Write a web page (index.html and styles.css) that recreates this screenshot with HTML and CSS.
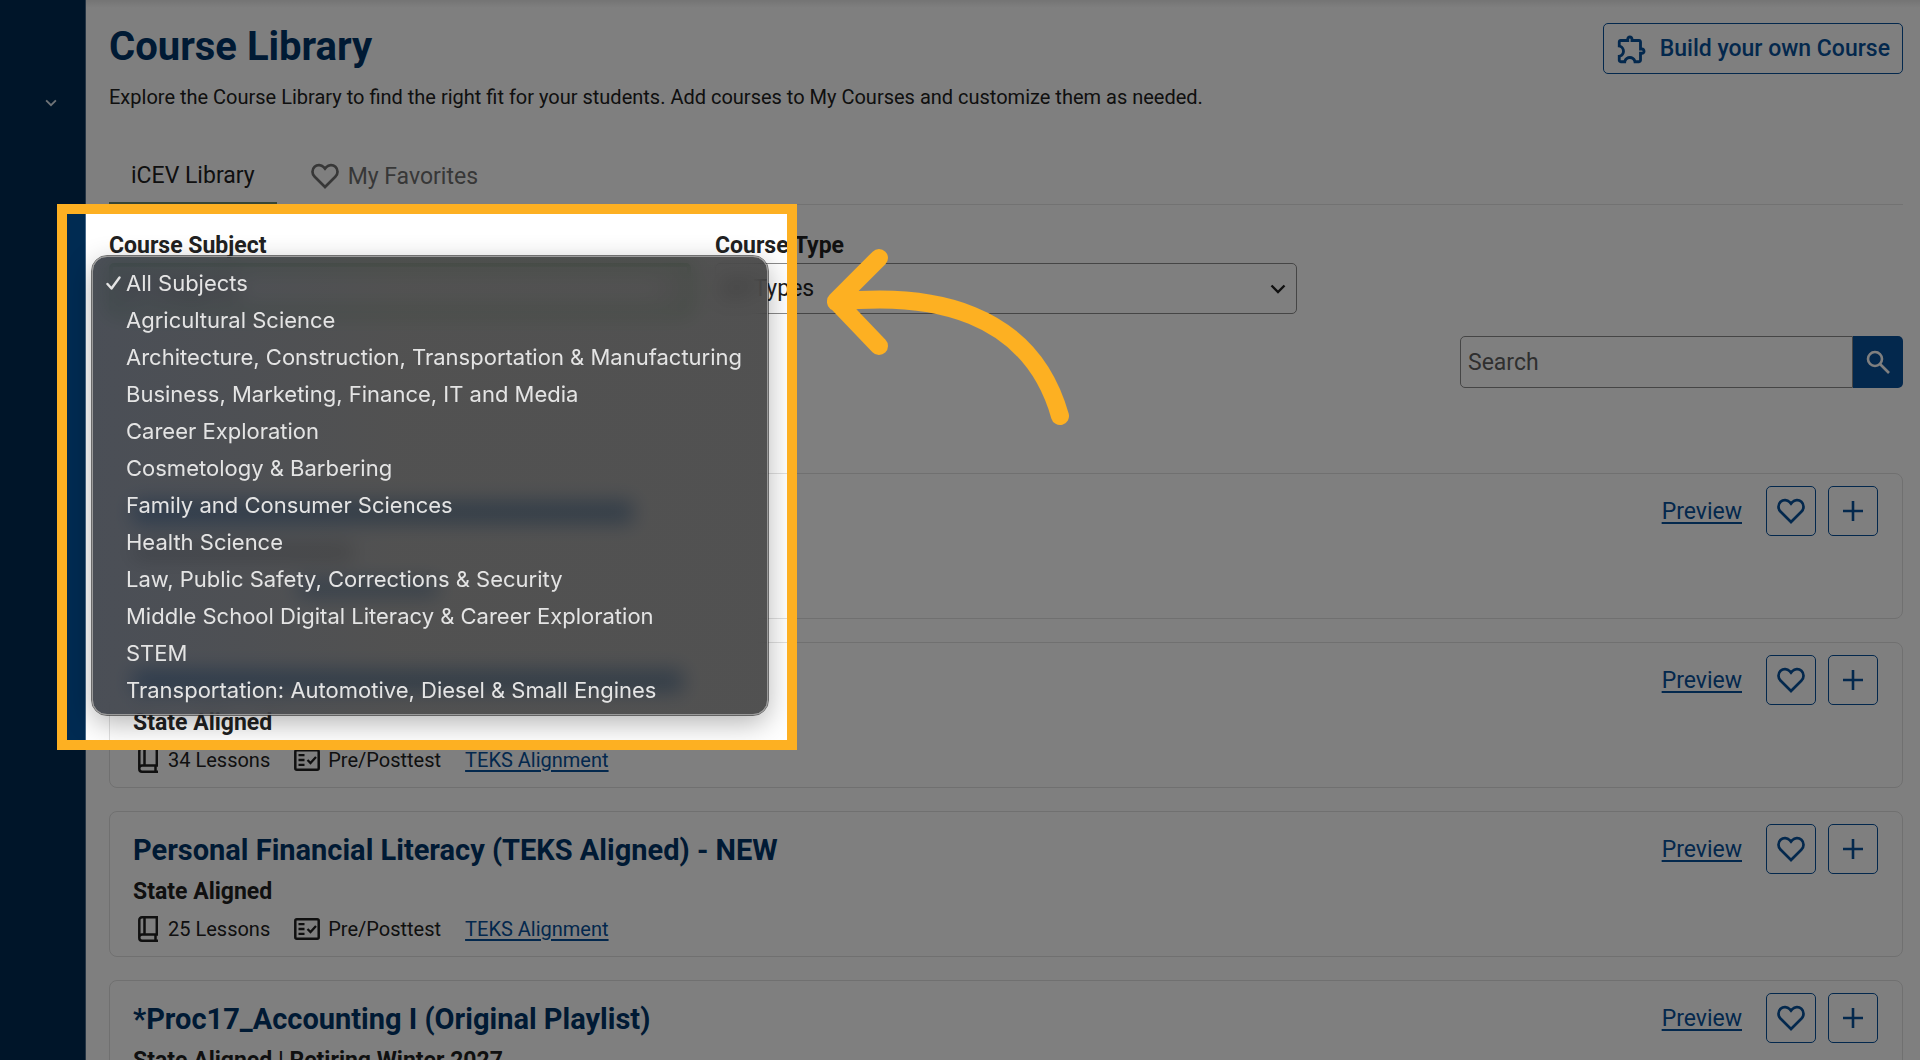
FILE: index.html
```html
<!DOCTYPE html>
<html lang="en">
<head>
    <meta charset="UTF-8">
    <meta name="viewport" content="width=device-width, initial-scale=1.0">
    <title>Course Library</title>
    <link rel="stylesheet" href="styles.css">
</head>
<body>
    <!-- shared icons -->
    <svg class="sprite" aria-hidden="true">
        <symbol id="heart" viewBox="0 0 28 26">
            <path d="M14 24 3.7 13.8C.7 10.9.8 6.4 3.6 3.8c2.7-2.5 6.7-2.2 9.1.4L14 5.7l1.3-1.5c2.4-2.6 6.4-2.9 9.1-.4 2.8 2.6 2.9 7.1-.1 10z" fill="none" stroke="currentColor" stroke-width="2.7"/>
        </symbol>
        <symbol id="plus" viewBox="0 0 20 20">
            <path d="M10 0v20M0 10h20" fill="none" stroke="currentColor" stroke-width="2.6"/>
        </symbol>
        <symbol id="chevron" viewBox="0 0 16 10">
            <path d="M1.5 1.5 8 8l6.5-6.5" fill="none" stroke="currentColor" stroke-width="2.4"/>
        </symbol>
        <symbol id="book" viewBox="0 0 20 26">
            <path d="M18.8 18.5V1.3H4C2.3 1.3 1.3 2.3 1.3 4v18c0 1.7 1 2.7 2.7 2.7h16M20 18.5H4c-1.7 0-2.7 1.2-2.7 2.8M17.5 18.5v6M6.5 1.3v17.2" fill="none" stroke="currentColor" stroke-width="2.5"/>
        </symbol>
        <symbol id="checklist" viewBox="0 0 26 22">
            <rect x="1.3" y="1.3" width="23.4" height="19.4" rx="1.5" fill="none" stroke="currentColor" stroke-width="2.5"/>
            <path d="M4.5 6.2h6M4.5 11h6M4.5 15.8h6M13.5 11l3 3 5.5-6" fill="none" stroke="currentColor" stroke-width="2.3"/>
        </symbol>
    </svg>

    <div class="app">
        <aside class="sidebar">
            <button class="sidebar-toggle" aria-label="Expand menu">
                <svg width="12" height="8"><use href="#chevron"/></svg>
            </button>
        </aside>

        <main class="content">
            <header class="page-header">
                <div>
                    <h1>Course Library</h1>
                    <p>Explore the Course Library to find the right fit for your students. Add courses to My Courses and customize them as needed.</p>
                </div>
                <button class="build-btn">
                    <svg width="34" height="34" viewBox="0 0 24 24" fill="currentColor"><path d="M10.5 4.5c.28 0 .5.22.5.5v2h6v6h2c.28 0 .5.22.5.5s-.22.5-.5.5h-2v6h-2.12c-.68-1.75-2.39-3-4.38-3s-3.7 1.25-4.38 3H4v-2.12c1.75-.68 3-2.39 3-4.38 0-1.99-1.24-3.7-2.99-4.38L4 7h6V5c0-.28.22-.5.5-.5m0-2C9.12 2.5 8 3.62 8 5H4c-1.1 0-1.99.9-1.99 2v3.8h.29c1.49 0 2.7 1.21 2.7 2.7s-1.21 2.7-2.7 2.7H2V20c0 1.1.9 2 2 2h3.8v-.3c0-1.49 1.21-2.7 2.7-2.7s2.7 1.21 2.7 2.7v.3H17c1.1 0 2-.9 2-2v-4c1.38 0 2.5-1.12 2.5-2.5S20.38 11 19 11V7c0-1.1-.9-2-2-2h-4c0-1.38-1.12-2.5-2.5-2.5z"/></svg>
                    Build your own Course
                </button>
            </header>

            <nav class="tabs">
                <a class="tab active" href="#library">iCEV Library</a>
                <a class="tab" href="#favorites">
                    <svg width="28" height="26"><use href="#heart"/></svg>
                    My Favorites
                </a>
            </nav>

            <div class="filters">
                <div class="field">
                    <label for="subject">Course Subject</label>
                    <div class="select-wrap open">
                        <select id="subject"><option>All Subjects</option></select>
                        <svg width="16" height="10"><use href="#chevron"/></svg>
                    </div>
                </div>
                <div class="field">
                    <label for="type">Course Type</label>
                    <div class="select-wrap">
                        <select id="type"><option>All Types</option></select>
                        <svg width="16" height="10"><use href="#chevron"/></svg>
                    </div>
                </div>
            </div>

            <form class="search">
                <input type="search" placeholder="Search" aria-label="Search">
                <button type="button" aria-label="Search">
                    <svg width="24" height="24" viewBox="0 0 24 24" fill="none" stroke="currentColor" stroke-width="2.6"><circle cx="9" cy="9" r="7"/><path d="M14 14l9 9"/></svg>
                </button>
            </form>

            <section class="courses">
                <article class="card">
                    <div class="card-body">
                        <div class="bar bar-title"></div>
                        <div class="bar bar-sub"></div>
                        <div class="bar bar-link"></div>
                    </div>
                    <div class="actions">
                        <a href="#preview">Preview</a>
                        <button class="icon-btn" aria-label="Favorite"><svg width="28" height="26"><use href="#heart"/></svg></button>
                        <button class="icon-btn" aria-label="Add"><svg width="20" height="20"><use href="#plus"/></svg></button>
                    </div>
                </article>

                <article class="card">
                    <div class="card-body">
                        <div class="bar bar-title wide"></div>
                        <div class="aligned">State Aligned</div>
                        <div class="meta">
                            <span class="lessons"><svg width="20" height="26"><use href="#book"/></svg>34 Lessons</span>
                            <span class="test"><svg width="26" height="22"><use href="#checklist"/></svg>Pre/Posttest</span>
                            <a href="#teks">TEKS Alignment</a>
                        </div>
                    </div>
                    <div class="actions">
                        <a href="#preview">Preview</a>
                        <button class="icon-btn" aria-label="Favorite"><svg width="28" height="26"><use href="#heart"/></svg></button>
                        <button class="icon-btn" aria-label="Add"><svg width="20" height="20"><use href="#plus"/></svg></button>
                    </div>
                </article>

                <article class="card">
                    <div class="card-body">
                        <h2>Personal Financial Literacy (TEKS Aligned) - NEW</h2>
                        <div class="aligned">State Aligned</div>
                        <div class="meta">
                            <span class="lessons"><svg width="20" height="26"><use href="#book"/></svg>25 Lessons</span>
                            <span class="test"><svg width="26" height="22"><use href="#checklist"/></svg>Pre/Posttest</span>
                            <a href="#teks">TEKS Alignment</a>
                        </div>
                    </div>
                    <div class="actions">
                        <a href="#preview">Preview</a>
                        <button class="icon-btn" aria-label="Favorite"><svg width="28" height="26"><use href="#heart"/></svg></button>
                        <button class="icon-btn" aria-label="Add"><svg width="20" height="20"><use href="#plus"/></svg></button>
                    </div>
                </article>

                <article class="card">
                    <div class="card-body">
                        <h2>*Proc17_Accounting I (Original Playlist)</h2>
                        <div class="aligned">State Aligned | Retiring Winter 2027</div>
                    </div>
                    <div class="actions">
                        <a href="#preview">Preview</a>
                        <button class="icon-btn" aria-label="Favorite"><svg width="28" height="26"><use href="#heart"/></svg></button>
                        <button class="icon-btn" aria-label="Add"><svg width="20" height="20"><use href="#plus"/></svg></button>
                    </div>
                </article>
            </section>
        </main>
    </div>

    <!-- open subject menu -->
    <ul class="menu" role="listbox" aria-label="Course Subject">
        <li role="option" aria-selected="true"><svg class="check" width="15" height="14" viewBox="0 0 15 14"><path d="M1.5 8 5.5 12.5 13.5 1.5" fill="none" stroke="currentColor" stroke-width="2.4" stroke-linecap="round" stroke-linejoin="round"/></svg>All Subjects</li>
        <li role="option">Agricultural Science</li>
        <li role="option">Architecture, Construction, Transportation &amp; Manufacturing</li>
        <li role="option">Business, Marketing, Finance, IT and Media</li>
        <li role="option">Career Exploration</li>
        <li role="option">Cosmetology &amp; Barbering</li>
        <li role="option">Family and Consumer Sciences</li>
        <li role="option">Health Science</li>
        <li role="option">Law, Public Safety, Corrections &amp; Security</li>
        <li role="option">Middle School Digital Literacy &amp; Career Exploration</li>
        <li role="option">STEM</li>
        <li role="option">Transportation: Automotive, Diesel &amp; Small Engines</li>
    </ul>

    <!-- spotlight and arrow -->
    <div class="spotlight"></div>
    <svg class="arrow" width="250" height="180" viewBox="824 246 250 180" aria-hidden="true">
        <path d="M836 302C930 292 1030 310 1060 416M879 258 836 301l43 45" fill="none" stroke="#fdb022" stroke-width="18" stroke-linecap="round" stroke-linejoin="round"/>
    </svg>
</body>
</html>
```
FILE: styles.css
```css
* {
    box-sizing: border-box;
}
body {
    margin: 0;
    font-family: Roboto, Arial, sans-serif;
    font-size: 23px;
    color: #212121;
    background: #fff;
    overflow: hidden;
}
button, input, select {
    font: inherit;
}
svg {
    flex: none;
}
.sprite {
    display: none;
}
a {
    color: #07509a;
    text-underline-offset: 3px;
}

.app {
    display: flex;
    height: 100vh;
}
.sidebar {
    flex: none;
    width: 86px;
    padding: 86px 28px 0 0;
    background: #002b52;
    border-right: 1px solid #4a6b8a;
    text-align: right;
}
.sidebar-toggle {
    padding: 0;
    border: none;
    background: none;
    color: #dfe6ee;
    line-height: 20px;
}
.content {
    flex: 1;
    padding: 23px 17px 0 23px;
    background: linear-gradient(#e9e9e9, #fff 8px);
}

.page-header {
    display: flex;
    justify-content: space-between;
    align-items: flex-start;
}
h1 {
    margin: 0 0 12px;
    font-size: 40px;
    line-height: 48px;
    color: #003468;
}
.page-header p {
    margin: 0;
    font-size: 20px;
    line-height: 28px;
}
.build-btn {
    display: flex;
    align-items: center;
    gap: 11px;
    height: 51px;
    padding: 0 12px 0 11px;
    border: 1px solid #07509a;
    border-radius: 5px;
    background: none;
    color: #07509a;
    font-weight: 500;
}

.tabs {
    display: flex;
    gap: 12px;
    margin-top: 37px;
    border-bottom: 1px solid #e5e5e5;
}
.tab {
    display: flex;
    align-items: center;
    gap: 9px;
    height: 56px;
    padding: 0 22px;
    color: #6f6f6f;
    text-decoration: none;
}
.tab.active {
    color: #212121;
    border-bottom: 2px solid #6d8a6d;
}

.filters {
    display: flex;
    gap: 24px;
    margin-top: 27px;
}
.field {
    flex: 0 1 582px;
}
.field label {
    display: block;
    margin-bottom: 3px;
    font-weight: 700;
    line-height: 28px;
}
.select-wrap {
    display: flex;
    align-items: center;
    height: 51px;
    padding-right: 10px;
    border: 1px solid #8a8a8a;
    border-radius: 5px;
}
.select-wrap.open {
    border: 4px solid #43a047;
}
.select-wrap select {
    flex: 1;
    padding: 0 6px;
    border: none;
    background: none;
    color: inherit;
    appearance: none;
}

.search {
    display: flex;
    justify-content: flex-end;
    height: 52px;
    margin: 22px 0 85px;
}
.search input {
    width: 393px;
    padding: 0 7px;
    border: 1px solid #8a8a8a;
    border-radius: 5px 0 0 5px;
    background: none;
}
.search input::placeholder {
    color: #5f5f5f;
}
.search button {
    display: flex;
    align-items: center;
    justify-content: center;
    width: 50px;
    border: none;
    border-radius: 0 5px 5px 0;
    background: #07509a;
    color: #fff;
}

.courses {
    display: flex;
    flex-direction: column;
    gap: 23px;
}
.card {
    display: flex;
    justify-content: space-between;
    min-height: 146px;
    padding: 11px 24px 12px 23px;
    border: 1px solid #e0e0e0;
    border-radius: 8px;
}
.card-body {
    padding-top: 10px;
}
.card h2 {
    margin: 0 0 10px;
    font-size: 29px;
    line-height: 34px;
    color: #003468;
}
.aligned {
    margin-bottom: 8px;
    font-weight: 700;
    line-height: 30px;
}
.meta {
    display: flex;
    gap: 24px;
    font-size: 20px;
    line-height: 28px;
}
.meta span {
    display: flex;
    align-items: center;
}
.lessons {
    gap: 10px;
    padding-left: 5px;
}
.test {
    gap: 8px;
}
.actions {
    display: flex;
    align-items: center;
    gap: 12px;
    height: 52px;
}
.actions a {
    margin-right: 12px;
    text-decoration-thickness: 2px;
}
.icon-btn {
    display: flex;
    align-items: center;
    justify-content: center;
    width: 50px;
    height: 50px;
    padding: 0;
    border: 1px solid #07509a;
    border-radius: 5px;
    background: none;
    color: #07509a;
}

/* course lines that sit under the menu */
.bar {
    height: 22px;
    margin: 6px 0 22px;
    background: #3d7fc4;
}
.bar-title {
    width: 500px;
}
.bar-title.wide {
    width: 550px;
    margin-bottom: 16px;
}
.bar-sub {
    width: 220px;
    height: 14px;
    background: #a5a5a5;
}
.bar-link {
    width: 140px;
    height: 14px;
    margin: 0 0 0 165px;
}

.menu {
    position: absolute;
    top: 256px;
    left: 92px;
    width: 676px;
    margin: 0;
    padding: 7px 0 6px;
    list-style: none;
    border: 1px solid #9a9a9a;
    border-radius: 15px;
    outline: 1px solid rgba(30, 30, 30, 0.6);
    background: linear-gradient(90deg, rgba(40, 45, 54, 0.84), rgba(48, 48, 48, 0.84) 45%);
    backdrop-filter: blur(10px);
    box-shadow: 0 8px 28px rgba(0, 0, 0, 0.3);
    font-family: Inter, sans-serif;
    font-size: 22px;
    color: #e4e4e4;
}
.menu li {
    display: flex;
    align-items: center;
    height: 37px;
    padding-left: 33px;
}
.check {
    margin: 0 5px 0 -20px;
}

/* dims everything outside the frame */
.spotlight {
    position: absolute;
    top: 204px;
    left: 57px;
    width: 740px;
    height: 546px;
    border: 10px solid #fdb022;
    box-shadow: 0 0 0 2000px rgba(0, 0, 0, 0.5);
    pointer-events: none;
}
.arrow {
    position: absolute;
    top: 246px;
    left: 824px;
    pointer-events: none;
}
```
